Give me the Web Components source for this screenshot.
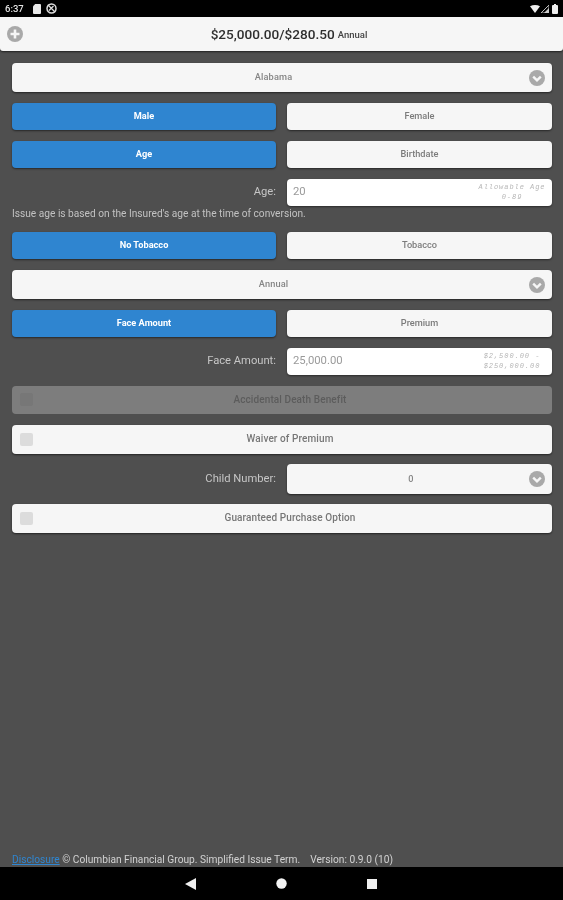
<!DOCTYPE html>
<html lang="en"><head><meta charset="utf-8"><title>Term quote</title>
<style>
html,body{margin:0;padding:0;background:#000}
body{font-family:Roboto,"Liberation Sans",sans-serif}
</style></head><body>
<quote-app>
  <status-bar slot="status"></status-bar>
  <quote-header slot="header" amount="$25,000.00/$280.50" mode="Annual"></quote-header>
  <select-row value="Alabama"></select-row>
  <toggle-pair a="Male" b="Female"></toggle-pair>
  <toggle-pair a="Age" b="Birthdate"></toggle-pair>
  <input-row label="Age:" value="20" hint="Allowable Age 0-89"></input-row>
  <note-text>Issue age is based on the Insured's age at the time of conversion.</note-text>
  <toggle-pair a="No Tobacco" b="Tobacco"></toggle-pair>
  <select-row value="Annual"></select-row>
  <toggle-pair a="Face Amount" b="Premium"></toggle-pair>
  <input-row label="Face Amount:" value="25,000.00" hint="$2,500.00 - $250,000.00"></input-row>
  <check-row disabled h="28">Accidental Death Benefit</check-row>
  <check-row>Waiver of Premium</check-row>
  <select-row class="tight" label="Child Number:" value="0" h="30"></select-row>
  <check-row class="tight">Guaranteed Purchase Option</check-row>
  <quote-footer slot="footer"></quote-footer>
  <nav-bar slot="nav"></nav-bar>
</quote-app>
<script>
function def(name, css, html, init){
  customElements.define(name, class extends HTMLElement{
    connectedCallback(){
      if(this.shadowRoot) return;
      const r=this.attachShadow({mode:'open'});
      const a=n=>this.getAttribute(n)||'';
      r.innerHTML='<style>'+css+'</style>'+(typeof html==='function'?html(a):html);
      if(init) init(this,r);
    }
  });
}
const chevron=`<svg viewBox="0 0 16 16" width="16" height="16"><circle cx="8" cy="8" r="8" fill="#a9a9a9"/><path d="M4.2 6.6 8 10.4l3.8-3.8" fill="none" stroke="#f6f6f6" stroke-width="2.4"/></svg>`;
const rowBox=`background:#f6f6f6;border-radius:4px;box-shadow:0 1px 2px rgba(0,0,0,.55);box-sizing:border-box;`;
const sizeFromAttr=(el)=>{
  if(el.getAttribute('h')) el.style.height=el.getAttribute('h')+'px';
  if(el.classList.contains('tight')) el.style.marginTop='-1px';
};

def('quote-app',`
:host{display:flex;flex-direction:column;width:563px;height:900px;background:#4f4f4f;overflow:hidden;filter:blur(.35px)}
main{flex:1;display:flex;flex-direction:column;gap:11px;padding:12px 11px 0 12px;min-height:0}
`,`<slot name="status"></slot><slot name="header"></slot><main><slot></slot></main><slot name="footer"></slot><slot name="nav"></slot>`);

def('status-bar',`
:host{display:flex;align-items:center;height:17px;background:#000;color:#e4e4e4;font-size:9.5px;font-weight:500;padding:0 5px;box-sizing:border-box}
span{width:28px}
svg{display:block}
.sp{flex:1}
`,`<span>6:37</span>
<svg width="8" height="10" viewBox="0 0 8 10"><path d="M2.2 0H7a1 1 0 0 1 1 1v8a1 1 0 0 1-1 1H1a1 1 0 0 1-1-1V2.200z" fill="#e8e8e8"/></svg>
<svg style="margin-left:5px" width="11" height="11" viewBox="0 0 11 11"><circle cx="5.500" cy="5.500" r="4.500" fill="none" stroke="#ddd" stroke-width="1.500"/><path d="M1.800 1.800l7.400 7.400M3 7.500 7.500 3" stroke="#ddd" stroke-width="1.300"/></svg>
<i class="sp"></i>
<svg width="10" height="8" viewBox="0 0 10 8"><path d="M0 1.200C3-.4 7-.4 10 1.200L5 8z" fill="#eee"/></svg>
<svg style="margin-left:1px" width="8" height="8" viewBox="0 0 8 8"><path d="M8 0v8H0z" fill="none" stroke="#bbb" stroke-width="1"/><path d="M8 3v5H3z" fill="#ccc"/></svg>
<svg style="margin-left:3px" width="6" height="10" viewBox="0 0 6 10"><path d="M2 0h2v1h1a1 1 0 0 1 1 1v7a1 1 0 0 1-1 1H1a1 1 0 0 1-1-1V2a1 1 0 0 1 1-1h1z" fill="#eee"/></svg>`);

def('quote-header',`
:host{display:flex;align-items:center;justify-content:center;position:relative;height:34px;padding-left:15px;box-sizing:border-box;padding-bottom:1px;background:#f6f6f6;border-radius:0 0 3px 3px;box-shadow:0 1px 2px rgba(0,0,0,.6);color:#333}
svg{position:absolute;left:7px;top:9px}
b{font-size:13.600px;font-weight:500;color:#2e2e2e}
span{font-size:9.500px;font-weight:500;margin-left:3px;margin-top:2px;color:#444}
`,a=>`<svg width="16" height="16" viewBox="0 0 16 16"><circle cx="8" cy="8" r="8" fill="#a9a9a9"/><path d="M8 3.500v9M3.500 8h9" stroke="#f6f6f6" stroke-width="2.600"/></svg><b>${a('amount')}</b><span>${a('mode')}</span>`);

def('select-row',`
:host{display:flex;align-items:center;gap:11px;height:29px}
label{width:264px;text-align:right;font-size:11.200px;color:#c6c6c6;padding-bottom:2px}
.box{${rowBox}flex:1;height:100%;display:flex;align-items:center;justify-content:center;position:relative;font-size:9.200px;font-weight:500;color:#858585;letter-spacing:.15px;padding:0 17px 2px 0}
svg{position:absolute;right:7px;top:50%;margin-top:-8px}
`,a=>`${a('label')?`<label>${a('label')}</label>`:''}<div class="box">${a('value')}${chevron}</div>`,sizeFromAttr);

def('toggle-pair',`
:host{display:grid;grid-template-columns:264px 265px;gap:11px;height:27px}
div{display:flex;align-items:center;justify-content:center;border-radius:4px;font-size:9.200px;font-weight:700;box-shadow:0 1px 2px rgba(0,0,0,.5);padding-bottom:3px;box-sizing:border-box}
.on{background:#2f85d0;color:#fff}
.off{background:#f6f6f6;color:#7b7b7b;font-weight:500}
`,a=>`<div class="on">${a('a')}</div><div class="off">${a('b')}</div>`);

def('input-row',`
:host{display:grid;grid-template-columns:264px 265px;gap:11px;height:27px}
label{align-self:center;text-align:right;font-size:11.200px;color:#c6c6c6;padding-bottom:2px}
.box{background:#fff;border-radius:4px;display:flex;align-items:center;justify-content:space-between;padding:0 5px 0 6px;box-shadow:0 1px 2px rgba(0,0,0,.45);font-size:11.300px;color:#9a9a9a}
.box span{padding-bottom:3px}
i{width:70px;text-align:center;font:italic 7px/10.500px "Liberation Mono",monospace;letter-spacing:.95px;color:#b6b6b6;padding-bottom:1px}
`,a=>`<label>${a('label')}</label><div class="box"><span>${a('value')}</span><i>${a('hint')}</i></div>`);

def('note-text',`
:host{display:block;height:12px;margin-top:-8px;font-size:10.170px;line-height:10px;color:#c2c2c2;white-space:nowrap}
`,`<slot></slot>`);

def('check-row',`
:host{display:block;height:29px}
div{${rowBox}height:100%;display:flex;align-items:center;justify-content:center;position:relative;font-size:10px;font-weight:500;color:#777;letter-spacing:.1px;padding:0 0 2px 16px}
i{position:absolute;left:8px;top:50%;margin-top:-7px;width:13px;height:13px;border-radius:2px;background:#dcdcdc}
:host([disabled]) div{background:#7d7d7d;color:#5c5c5c;box-shadow:none}
:host([disabled]) i{background:#777}
`,`<div><i></i><span><slot></slot></span></div>`,sizeFromAttr);

def('quote-footer',`
:host{display:flex;height:16px;align-items:flex-start;padding-left:12px;font-size:10.200px;line-height:17px;color:#d2d2d2;white-space:nowrap;background:#4f4f4f}
a{color:#2f86d1;text-decoration:underline}
.v{margin-left:10px}
`,`<span><a href="#">Disclosure</a> © Columbian Financial Group. Simplified Issue Term.</span><span class="v">Version: 0.9.0 (10)</span>`);

def('nav-bar',`
:host{display:flex;align-items:center;justify-content:center;gap:80px;height:33px;background:#000;padding-right:1px;box-sizing:border-box}
svg{display:block}
`,`<svg width="11" height="12" viewBox="0 0 11 12"><path d="M11 0v12L0 6z" fill="#efefef"/></svg>
<svg width="11" height="11" viewBox="0 0 11 11"><circle cx="5.500" cy="5.500" r="5.200" fill="#f4f4f4"/></svg>
<svg width="10" height="10" viewBox="0 0 10 10"><rect width="10" height="10" fill="#f0f0f0"/></svg>`);
</script>
</body></html>
